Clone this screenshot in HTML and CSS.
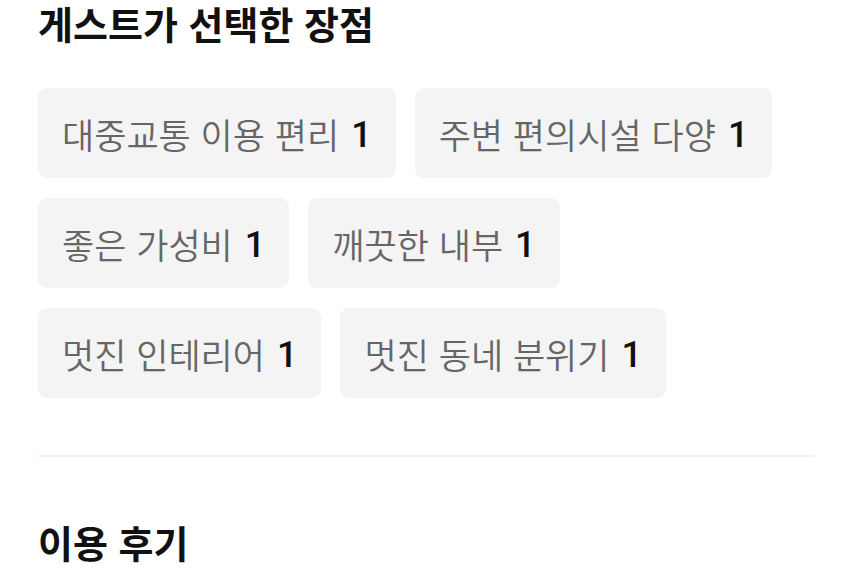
FILE: index.html
```html
<!DOCTYPE html>
<html lang="ko">
  <head>
    <meta charset="UTF-8" />
    <meta name="viewport" content="width=device-width, initial-scale=1.0" />
    <title>게스트가 선택한 장점</title>
    <link rel="stylesheet" href="styles.css">
  </head>
  <body>
    <div class="container">
      <section class="merits">
        <h2 class="section-title">게스트가 선택한 장점</h2>
        <ul class="chips">
          <li class="chip">대중교통 이용 편리 <span class="count">1</span></li>
          <li class="chip">주변 편의시설 다양 <span class="count">1</span></li>
          <li class="chip">좋은 가성비 <span class="count">1</span></li>
          <li class="chip">깨끗한 내부 <span class="count">1</span></li>
          <li class="chip">멋진 인테리어 <span class="count">1</span></li>
          <li class="chip">멋진 동네 분위기 <span class="count">1</span></li>
        </ul>
      </section>

      <hr class="divider" />

      <section class="reviews">
        <h2 class="section-title">이용 후기</h2>
      </section>
    </div>
  </body>
</html>
```

FILE: styles.css
```css
body {
  margin: 0;
  font-family: "Noto Sans CJK KR", "Noto Sans", sans-serif;
  color: #111;
  background-color: #fff;
}
.container {
  padding: 0 38px;
}
.section-title {
  margin: 0;
  font-size: 38px;
  font-weight: 700;
  line-height: 46px;
}
.chips {
  list-style: none;
  margin: 42px 0 0;
  padding: 0;
  display: flex;
  flex-wrap: wrap;
  gap: 20px 19px;
}
.chip {
  height: 90px;
  display: inline-flex;
  align-items: center;
  padding: 0 24px;
  background-color: #f4f4f4;
  border-radius: 9px;
  color: #666;
  font-size: 35px;
  font-weight: 350;
}
.count {
  margin-left: 12px;
  padding-top: 4px;
  font-family: Roboto, "Noto Sans", sans-serif;
  font-size: 36px;
  font-weight: 500;
  color: #111;
}
.divider {
  margin: 57px 0 0;
  border: none;
  height: 2px;
  background-color: #f2f2f2;
}
.reviews {
  padding-top: 62px;
}
```
